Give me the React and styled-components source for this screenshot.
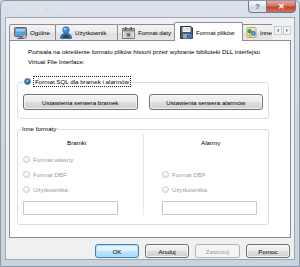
import React from "react";
import styled, { createGlobalStyle, css } from "styled-components";

const Global = createGlobalStyle`
  html, body {
    margin: 0;
    padding: 0;
    background: #cfd8e2;
  }
  body {
    font-family: "Liberation Sans", Arial, sans-serif;
    font-size: 6.2px;
    color: #000;
  }
`;

const Window = styled.div`
  width: 300px;
  height: 267px;
  box-sizing: border-box;
  display: flex;
  flex-direction: column;
  background: linear-gradient(180deg, #d9e1ea 0%, #cdd7e2 40%, #c9d3de 100%);
  border: 1px solid #8b98a8;
  border-radius: 5px 5px 0 0;
  overflow: hidden;
`;

const TitleBar = styled.div`
  height: 16px;
  flex: none;
  display: flex;
  justify-content: space-between;
  align-items: flex-start;
  padding-left: 12px;
  padding-right: 3px;
`;

const Title = styled.span`
  margin-top: 4px;
  color: #fff;
  font-size: 6.6px;
  text-shadow: 0 0 1px rgba(110, 125, 140, 0.7), 0 0 4px rgba(255, 255, 255, 0.9);
`;

const Captions = styled.div`
  display: flex;
  margin-top: -1px;
`;

const CaptionButton = styled.div`
  height: 13px;
  width: ${(p) => p.$w}px;
  box-sizing: border-box;
  display: flex;
  align-items: center;
  justify-content: center;
  border: 1px solid #6d7b8c;
  font-size: 8px;
  font-weight: bold;
  ${(p) =>
    p.$close
      ? css`
          background: linear-gradient(180deg, #e8a596 0%, #d3705d 45%, #c0432c 55%, #d3715b 100%);
          border-radius: 0 0 4px 0;
          color: #fff;
        `
      : css`
          background: linear-gradient(180deg, #f2f5f8 0%, #e2e8ee 45%, #d0d8e2 55%, #dde3ea 100%);
          border-right: none;
          border-radius: 0 0 0 4px;
          color: #5a6674;
        `}
`;

const Client = styled.div`
  flex: 1;
  margin: 0 4px 6px 4px;
  background: #f0f0f0;
  border: 1px solid #9aa8b8;
  padding: 5px 3px 0 3px;
  display: flex;
  flex-direction: column;
`;

const TabStrip = styled.div`
  height: 17px;
  display: flex;
  align-items: flex-end;
  position: relative;
  z-index: 1;
`;

const TabsViewport = styled.div`
  width: 262px;
  height: 19px;
  margin-bottom: -1px;
  display: flex;
  align-items: flex-end;
  overflow: hidden;
  padding-left: 1px;
`;

const Tab = styled.div`
  flex: none;
  width: ${(p) => p.$w}px;
  box-sizing: border-box;
  display: flex;
  align-items: center;
  gap: 3px;
  padding-left: 4px;
  border: 1px solid #898c95;
  border-bottom: none;
  margin-left: -1px;
  border-radius: 2px 2px 0 0;
  white-space: nowrap;
  ${(p) =>
    p.$active
      ? css`
          height: 19px;
          background: #fff;
          position: relative;
          z-index: 2;
          margin-right: -1px;
          padding-left: 5px;
        `
      : css`
          height: 16px;
          margin-bottom: 1px;
          background: linear-gradient(180deg, #f3f3f3 0%, #ebebeb 50%, #dedede 51%, #e6e6e6 100%);
        `}
`;

const Arrows = styled.div`
  display: flex;
  gap: 1px;
  margin-left: 2px;
  align-self: center;
  margin-top: -2px;
`;

const ArrowButton = styled.div`
  width: 8px;
  height: 9px;
  box-sizing: border-box;
  border: 1px solid #c6c9cf;
  background: #f5f5f5;
  display: flex;
  align-items: center;
  justify-content: center;
`;

const Panel = styled.div`
  height: 198px;
  box-sizing: border-box;
  background: #fff;
  border: 1px solid #898c95;
  padding: 6px 21px 0 7px;
  display: flex;
  flex-direction: column;
`;

const Intro = styled.p`
  margin: 0 -21px 9px 0;
  padding-left: 11px;
  line-height: 10px;
`;

const Group = styled.fieldset`
  margin: ${(p) => p.$mt || 0}px 0 0 0;
  padding: 0 5px ${(p) => p.$pb}px 5px;
  border: 1px solid #d5dfe5;
  border-radius: 3px;
  min-width: 0;
`;

const Legend = styled.legend`
  padding: 0 1px;
  margin-left: ${(p) => p.$ml}px;
  line-height: 10px;
`;

const RadioLabel = styled.span`
  display: inline-flex;
  align-items: center;
  gap: 2px;
`;

const FocusText = styled.span`
  border: 1px dotted #222;
  padding: 0 1px;
  line-height: 9px;
`;

const Radio = styled.span`
  width: 7px;
  height: 7px;
  box-sizing: border-box;
  border-radius: 50%;
  flex: none;
  ${(p) =>
    p.$checked
      ? css`
          border: 1px solid #5b6e86;
          background: radial-gradient(circle at 45% 40%, #7fd0ff 0%, #2a7fd0 45%, #1b4f8f 70%, #e8eef4 72%);
        `
      : css`
          border: 1px solid #c9c9c9;
          background: radial-gradient(circle at 40% 35%, #ffffff 0%, #e6e6e6 100%);
        `}
`;

const ButtonRow = styled.div`
  display: grid;
  grid-template-columns: 1fr 1fr;
  gap: 11px;
  margin-top: 6px;
`;

const Button = styled.div`
  height: ${(p) => p.$h || 16}px;
  width: ${(p) => (p.$w ? `${p.$w}px` : "auto")};
  box-sizing: border-box;
  display: flex;
  align-items: center;
  justify-content: center;
  border: 1px solid #707070;
  border-radius: 3px;
  background: linear-gradient(180deg, #f2f2f2 0%, #ebebeb 50%, #dddddd 51%, #cfcfcf 100%);
  box-shadow: inset 0 0 0 1px rgba(255, 255, 255, 0.7);
  color: #000;
  ${(p) =>
    p.$default &&
    css`
      border-color: #3c7fb1;
      background: linear-gradient(180deg, #eaf6fd 0%, #d9f0fc 50%, #bee6fd 51%, #a7d9f5 100%);
      box-shadow: inset 0 0 0 1px #b4e0f7;
    `}
  ${(p) =>
    p.$disabled &&
    css`
      border-color: #adb2b5;
      background: #f4f4f4;
      box-shadow: none;
      color: #9a9a9a;
    `}
`;

const Columns = styled.div`
  display: grid;
  grid-template-columns: 125px 1fr;
  margin: 0 -5px;
`;

const Column = styled.div`
  display: flex;
  flex-direction: column;
  padding-left: ${(p) => p.$pl}px;
  ${(p) => p.$divider && "border-left: 1px solid #e3e8ec;"}
`;

const ColumnTitle = styled.div`
  line-height: 10px;
  margin: 4px 0 4px ${(p) => p.$ml}px;
`;

const OptionRow = styled.div`
  height: 15px;
  display: flex;
  align-items: center;
  gap: 3px;
  color: #9a9a9a;
`;

const TextBox = styled.div`
  width: 95px;
  height: 14px;
  box-sizing: border-box;
  margin-top: 4px;
  border: 1px solid #cbcbcb;
  background: #fff;
`;

const Footer = styled.div`
  display: flex;
  justify-content: flex-end;
  gap: 6px;
  padding: 6px 1px 0 0;
`;

const MonitorIcon = () => (
  <svg width="13" height="12" viewBox="0 0 13 12">
    <rect x="0.5" y="0.5" width="12" height="9" rx="1" fill="#8c96a2" stroke="#59626d" />
    <rect x="2" y="2" width="9" height="6" fill="#4aa3e6" />
    <rect x="2" y="2" width="9" height="2.5" fill="#8dd0ff" />
    <rect x="5" y="9.5" width="3" height="1.5" fill="#6c7480" />
    <rect x="3" y="11" width="7" height="1" fill="#59626d" />
    <circle cx="10.5" cy="9.5" r="2" fill="#b9bec6" stroke="#6c7480" strokeWidth="0.7" />
  </svg>
);

const UserIcon = () => (
  <svg width="12" height="13" viewBox="0 0 12 13">
    <circle cx="6" cy="4" r="3.3" fill="#3f8fe0" stroke="#1f5a9e" strokeWidth="0.6" />
    <ellipse cx="5" cy="3" rx="1.4" ry="1" fill="#a8d8ff" />
    <path d="M0.5 12.5 C0.5 8.5 2.5 7.5 6 7.5 C9.5 7.5 11.5 8.5 11.5 12.5 Z" fill="#2a6fc0" stroke="#1a4b85" strokeWidth="0.6" />
    <path d="M3 12 C3 10 4 9 6 9 C8 9 9 10 9 12 Z" fill="#3d3f45" />
  </svg>
);

const CalendarIcon = () => (
  <svg width="13" height="12" viewBox="0 0 13 12">
    <rect x="0.5" y="1.5" width="12" height="10" fill="#e4e4e4" stroke="#7d7d7d" />
    <rect x="0.5" y="1.5" width="12" height="2.5" fill="#9a9a9a" stroke="#7d7d7d" />
    <rect x="3" y="0" width="1.5" height="3" fill="#555" />
    <rect x="8.5" y="0" width="1.5" height="3" fill="#555" />
    <path d="M2 6h9M2 8h9M2 10h9M4.5 5v6M6.5 5v6M8.5 5v6" stroke="#9b9b9b" strokeWidth="0.5" />
    <rect x="5" y="6.3" width="3" height="3" fill="#6a6a6a" />
  </svg>
);

const FloppyIcon = () => (
  <svg width="13" height="13" viewBox="0 0 13 13">
    <path d="M0.5 0.5h10.5l1.5 1.5v10.5h-12z" fill="#4d5a6b" stroke="#2f3946" />
    <rect x="2.5" y="1" width="8" height="5" fill="#f4f6f8" />
    <path d="M3.5 2.5h6M3.5 4h6" stroke="#a7b0bb" strokeWidth="0.5" />
    <rect x="3" y="8" width="7" height="4.5" fill="#9aa6b4" />
    <rect x="7" y="9" width="1.6" height="2.6" fill="#3a4654" />
    <rect x="8.5" y="8.5" width="4" height="4" fill="#2d7fd6" />
  </svg>
);

const PluginIcon = () => (
  <svg width="12" height="13" viewBox="0 0 12 13">
    <rect x="1" y="1" width="10" height="11" rx="1" fill="#e9e2b0" stroke="#8c8150" strokeWidth="0.6" />
    <circle cx="4" cy="5" r="2.4" fill="#3da33d" />
    <circle cx="8" cy="7.5" r="2.6" fill="#2c74cf" />
    <circle cx="4.5" cy="9.5" r="1.8" fill="#f0b828" />
    <path d="M7 6.5l2 2M9 6.5l-2 2" stroke="#fff" strokeWidth="0.6" />
  </svg>
);

const ArrowGlyph = ({ dir }) => (
  <svg width="4" height="5" viewBox="0 0 4 5">
    <path d={dir === "left" ? "M3 0.5 L0.8 2.5 L3 4.5 Z" : "M1 0.5 L3.2 2.5 L1 4.5 Z"} fill="#8a8f98" />
  </svg>
);

const tabs = [
  { label: "Ogólne", icon: <MonitorIcon />, w: 47 },
  { label: "Użytkownik", icon: <UserIcon />, w: 63 },
  { label: "Format daty", icon: <CalendarIcon />, w: 58 },
  { label: "Format plików", icon: <FloppyIcon />, w: 69, active: true },
  { label: "Inne", icon: <PluginIcon />, w: 32 },
];

export default function App() {
  return (
    <>
      <Global />
      <Window>
        <TitleBar>
          <Title>Właściwości stacji</Title>
          <Captions>
            <CaptionButton $w={18}>?</CaptionButton>
            <CaptionButton $w={30} $close>
              ✕
            </CaptionButton>
          </Captions>
        </TitleBar>

        <Client>
          <TabStrip>
            <TabsViewport>
              {tabs.map((t) => (
                <Tab key={t.label} $w={t.w} $active={t.active}>
                  {t.icon}
                  <span>{t.label}</span>
                </Tab>
              ))}
            </TabsViewport>
            <Arrows>
              <ArrowButton>
                <ArrowGlyph dir="left" />
              </ArrowButton>
              <ArrowButton>
                <ArrowGlyph dir="right" />
              </ArrowButton>
            </Arrows>
          </TabStrip>

          <Panel>
            <Intro>
              Pozwala na określenie formatu plików historii przez wybranie biblioteki DLL interfejsu
              <br />
              Virtual File Interface:
            </Intro>

            <Group $pb={8}>
              <Legend $ml={0}>
                <RadioLabel>
                  <Radio $checked />
                  <FocusText>Format SQL dla bramek i alarmów</FocusText>
                </RadioLabel>
              </Legend>
              <ButtonRow>
                <Button>Ustawienia serwera bramek</Button>
                <Button>Ustawienia serwera alarmów</Button>
              </ButtonRow>
            </Group>

            <Group $pb={9} $mt={5}>
              <Legend $ml={-2}>Inne formaty</Legend>
              <Columns>
                <Column $pl={5}>
                  <ColumnTitle $ml={44}>Bramki</ColumnTitle>
                  <OptionRow>
                    <Radio />
                    Format własny
                  </OptionRow>
                  <OptionRow>
                    <Radio />
                    Format DBF
                  </OptionRow>
                  <OptionRow>
                    <Radio />
                    Użytkownika:
                  </OptionRow>
                  <TextBox />
                </Column>
                <Column $pl={18} $divider>
                  <ColumnTitle $ml={39}>Alarmy</ColumnTitle>
                  <OptionRow />
                  <OptionRow>
                    <Radio />
                    Format DBF
                  </OptionRow>
                  <OptionRow>
                    <Radio />
                    Użytkownika:
                  </OptionRow>
                  <TextBox />
                </Column>
              </Columns>
            </Group>
          </Panel>

          <Footer>
            <Button $w={44} $h={14} $default>
              OK
            </Button>
            <Button $w={44} $h={14}>
              Anuluj
            </Button>
            <Button $w={45} $h={14} $disabled>
              Zastosuj
            </Button>
            <Button $w={44} $h={14}>
              Pomoc
            </Button>
          </Footer>
        </Client>
      </Window>
    </>
  );
}
